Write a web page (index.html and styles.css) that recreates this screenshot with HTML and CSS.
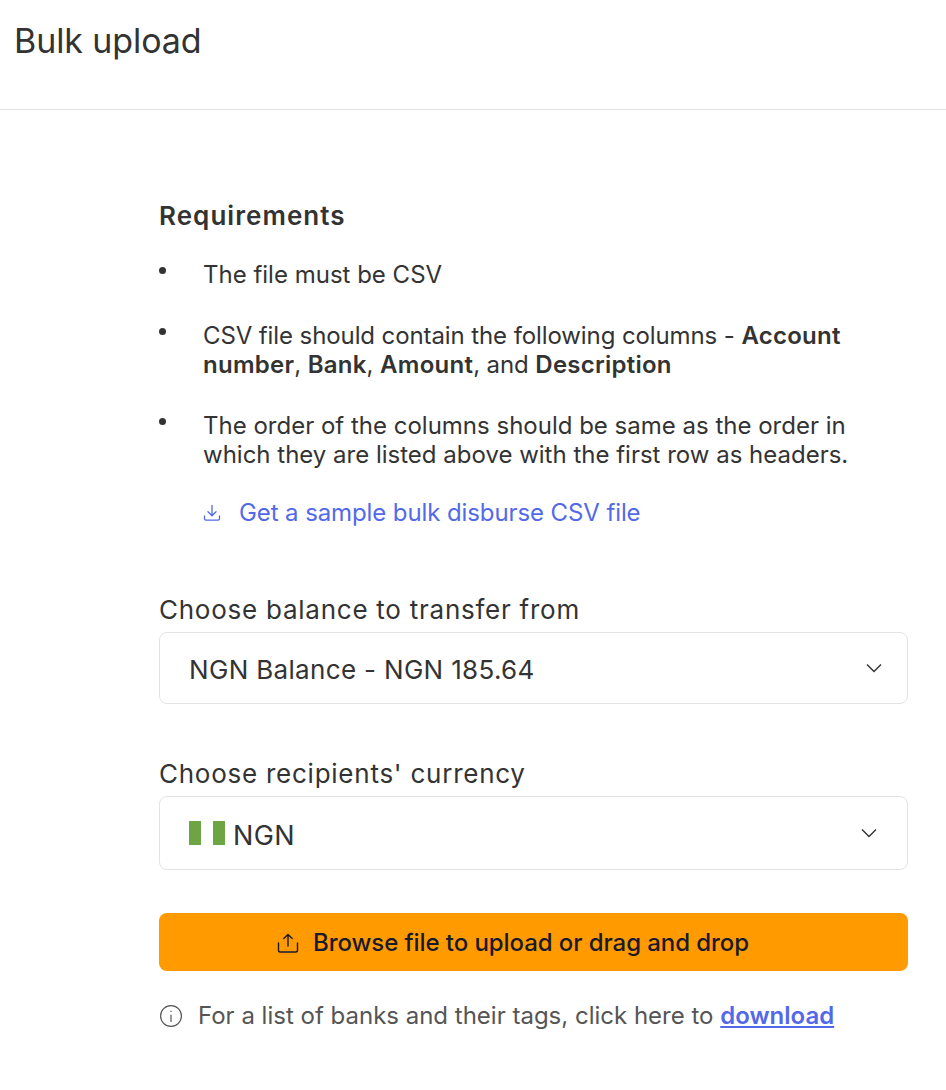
FILE: index.html
```html
<!DOCTYPE html>
<html lang="en">
<head>
    <meta charset="UTF-8">
    <meta name="viewport" content="width=device-width, initial-scale=1.0">
    <title>Bulk upload</title>
    <link rel="stylesheet" href="styles.css">
</head>
<body>
    <header class="page-header">
        <h1>Bulk upload</h1>
    </header>
    <main class="content">
        <h2>Requirements</h2>
        <ul class="req-list">
            <li>The file must be CSV</li>
            <li class="req-columns">CSV file should contain the following columns - <b>Account number</b>, <b>Bank</b>, <b>Amount</b>, and <b>Description</b></li>
            <li>The order of the columns should be same as the order in which they are listed above with the first row as headers.</li>
        </ul>
        <a class="sample-link" href="#">
            <svg width="20" height="20" viewBox="0 0 20 20" fill="none" stroke="currentColor" stroke-width="1.3" stroke-linecap="round" stroke-linejoin="round">
                <path d="M10 2.5v10M6 8.8l4 3.9 4-3.9"/>
                <path d="M2.5 13v2.8a1.4 1.4 0 0 0 1.4 1.4h12.2a1.4 1.4 0 0 0 1.4-1.4V13"/>
            </svg>
            Get a sample bulk disburse CSV file
        </a>

        <label class="field-label">Choose balance to transfer from</label>
        <div class="select balance-select">
            <span>NGN Balance - NGN 185.64</span>
            <svg class="chevron" width="16" height="10" viewBox="0 0 16 10" fill="none" stroke="currentColor" stroke-width="1.4"><path d="M1 1.5l7 7 7-7"/></svg>
        </div>

        <label class="field-label currency-label">Choose recipients' currency</label>
        <div class="select currency-select">
            <span class="flag"></span>
            <span>NGN</span>
            <svg class="chevron" width="16" height="10" viewBox="0 0 16 10" fill="none" stroke="currentColor" stroke-width="1.4"><path d="M1 1.5l7 7 7-7"/></svg>
        </div>

        <button class="upload-btn" type="button">
            <svg width="22" height="22" viewBox="0 0 22 22" fill="none" stroke="currentColor" stroke-width="1.4" stroke-linecap="round" stroke-linejoin="round">
                <path d="M11 14V2.5M6.8 6.5L11 2.5l4.2 4"/>
                <path d="M1.5 11v7.2a1.8 1.8 0 0 0 1.8 1.8h15.4a1.8 1.8 0 0 0 1.8-1.8V11"/>
            </svg>
            Browse file to upload or drag and drop
        </button>

        <p class="note">
            <svg width="24" height="24" viewBox="0 0 24 24" fill="none" stroke="currentColor" stroke-width="1.2" stroke-linecap="round">
                <circle cx="12" cy="12" r="10.4"/>
                <path d="M12 11v6.5"/>
                <path d="M12 7v.4"/>
            </svg>
            <span>For a list of banks and their tags, click here to <a href="#">download</a></span>
        </p>
    </main>
</body>
</html>
```

FILE: styles.css
```css
* {
    box-sizing: border-box;
}
body {
    font-family: Inter, "Liberation Sans", sans-serif;
    background-color: #fff;
    color: #333;
    margin: 0;
    padding: 0;
    font-size: 24px;
    line-height: 29px;
}
.page-header {
    height: 110px;
    border-bottom: 1px solid #e3e3e3;
    padding: 20px 14px 0;
}
h1 {
    font-size: 34px;
    line-height: 42px;
    font-weight: 400;
    letter-spacing: -0.1px;
    margin: 0;
}
.content {
    padding: 91px 38px 0 159px;
}
h2 {
    font-size: 26px;
    line-height: 30px;
    font-weight: 600;
    letter-spacing: 1.05px;
    margin: 0 0 29px;
}
.req-list {
    list-style: none;
    margin: 0;
    padding: 0 0 0 44px;
}
.req-list li {
    position: relative;
    margin-bottom: 32px;
}
.req-list li::before {
    content: "";
    position: absolute;
    left: -44px;
    top: 7px;
    width: 7px;
    height: 7px;
    border-radius: 50%;
    background-color: #333;
}
.req-list .req-columns {
    letter-spacing: -0.1px;
}
b {
    font-weight: 600;
    letter-spacing: 0.25px;
}
.sample-link {
    display: flex;
    align-items: center;
    gap: 17px;
    margin: -3px 0 0 43px;
    color: #5469e8;
    letter-spacing: -0.1px;
    text-decoration: none;
}
.field-label {
    display: block;
    margin-top: 68px;
    font-size: 26px;
    letter-spacing: 0.75px;
}
.select {
    display: flex;
    align-items: center;
    margin-top: 8px;
    padding: 2px 25px 0 29px;
    border: 1px solid #e3e3e3;
    border-radius: 8px;
    font-size: 26px;
    letter-spacing: 0.33px;
}
.select .chevron {
    margin-top: -2px;
}
.balance-select {
    height: 72px;
}
.currency-label {
    margin-top: 55px;
}
.currency-select {
    height: 74px;
    padding-top: 4px;
    padding-right: 30px;
    font-size: 27px;
    letter-spacing: 0.4px;
}
.currency-select .chevron {
    margin-top: -4px;
}
.chevron {
    margin-left: auto;
}
.flag {
    width: 36px;
    height: 24px;
    margin: -4px 8px 0 0;
    background: linear-gradient(to right, #6ea544 33.3%, #fff 33.3%, #fff 66.6%, #6ea544 66.6%);
}
.upload-btn {
    display: flex;
    align-items: center;
    justify-content: center;
    gap: 14px;
    width: 100%;
    height: 58px;
    margin-top: 43px;
    padding: 1px 41px 0 0;
    background-color: #ff9a00;
    color: #1a1a2e;
    border: none;
    border-radius: 8px;
    font-family: inherit;
    font-size: 24px;
    font-weight: 500;
    letter-spacing: -0.08px;
}
.note {
    display: flex;
    align-items: center;
    gap: 15px;
    margin: 30px 0 0;
    color: #555;
}
.note a {
    color: #5469e8;
    font-weight: 600;
}
```
